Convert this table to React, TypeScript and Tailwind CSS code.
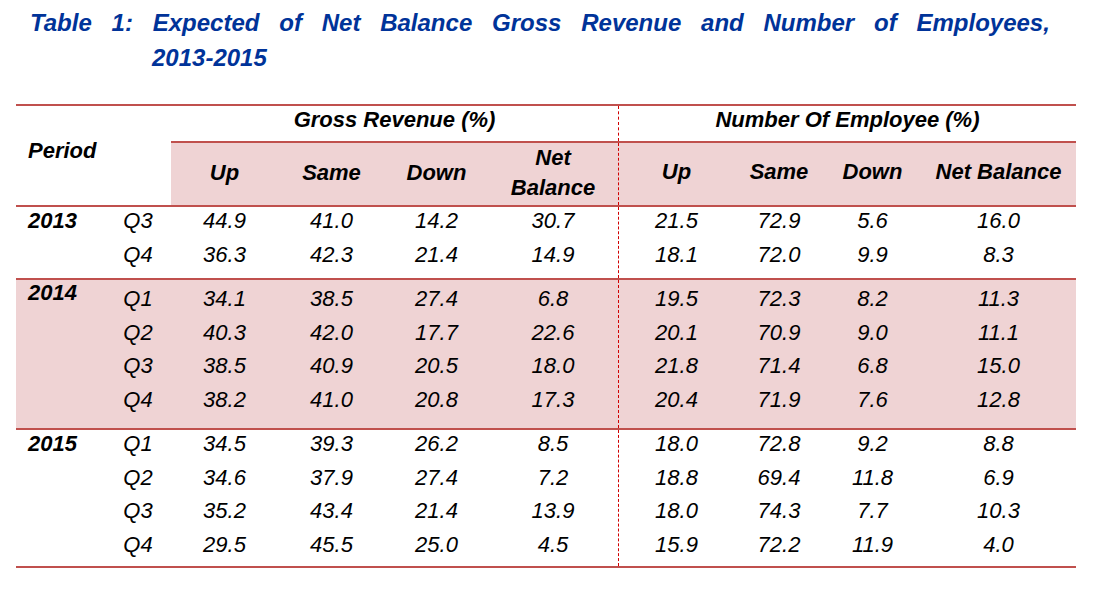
import React from "react";

type Row = { q: string; v: string[] };
type Group = { year: string; rows: Row[]; shaded?: boolean; pad: string; yearClass?: string };

const titleWords = ["Table", "1:", "Expected", "of", "Net", "Balance", "Gross", "Revenue", "and", "Number", "of", "Employees,"];

const groups: Group[] = [
  {
    year: "2013",
    pad: "pt-0 pb-[4px]",
    rows: [
      { q: "Q3", v: ["44.9", "41.0", "14.2", "30.7", "21.5", "72.9", "5.6", "16.0"] },
      { q: "Q4", v: ["36.3", "42.3", "21.4", "14.9", "18.1", "72.0", "9.9", "8.3"] },
    ],
  },
  {
    year: "2014",
    shaded: true,
    pad: "pt-[5px] pb-[9px]",
    yearClass: "-mt-[6px]",
    rows: [
      { q: "Q1", v: ["34.1", "38.5", "27.4", "6.8", "19.5", "72.3", "8.2", "11.3"] },
      { q: "Q2", v: ["40.3", "42.0", "17.7", "22.6", "20.1", "70.9", "9.0", "11.1"] },
      { q: "Q3", v: ["38.5", "40.9", "20.5", "18.0", "21.8", "71.4", "6.8", "15.0"] },
      { q: "Q4", v: ["38.2", "41.0", "20.8", "17.3", "20.4", "71.9", "7.6", "12.8"] },
    ],
  },
  {
    year: "2015",
    pad: "pt-0 pb-[2px]",
    rows: [
      { q: "Q1", v: ["34.5", "39.3", "26.2", "8.5", "18.0", "72.8", "9.2", "8.8"] },
      { q: "Q2", v: ["34.6", "37.9", "27.4", "7.2", "18.8", "69.4", "11.8", "6.9"] },
      { q: "Q3", v: ["35.2", "43.4", "21.4", "13.9", "18.0", "74.3", "7.7", "10.3"] },
      { q: "Q4", v: ["29.5", "45.5", "25.0", "4.5", "15.9", "72.2", "11.9", "4.0"] },
    ],
  },
];

const GroupBlock: React.FC<{ g: Group }> = ({ g }) => (
  <div className={`flex border-t-2 border-[#c0504d] ${g.shaded ? "bg-[#efd3d4]" : ""}`}>
    <div className={`w-[602px] grid grid-cols-[89px_66px_107px_107px_103px_130px] auto-rows-[33.5px] leading-[27px] ${g.pad}`}>
      {g.rows.map((r, i) => (
        <React.Fragment key={r.q}>
          <div className={`pl-3 font-bold ${g.yearClass ?? ""}`}>{i === 0 ? g.year : ""}</div>
          <div className="text-center">{r.q}</div>
          {r.v.slice(0, 4).map((v, j) => (
            <div key={j} className="text-center">{v}</div>
          ))}
        </React.Fragment>
      ))}
    </div>
    <div className={`flex-1 border-l border-dashed border-[#d00000] grid grid-cols-[115px_90px_97px_155px] auto-rows-[33.5px] leading-[27px] ${g.pad}`}>
      {g.rows.map((r) =>
        r.v.slice(4).map((v, j) => (
          <div key={r.q + j} className="text-center">{v}</div>
        ))
      )}
    </div>
  </div>
);

export default function App() {
  return (
    <div className="w-[1096px] h-[589px] bg-white text-black italic font-['Liberation_Sans',Arial,sans-serif] text-[22px]">
      <div className="pt-[5px] font-bold text-[#003399] text-[24px] leading-[35px]">
        <div className="ml-[30px] w-[1020px] flex justify-between">
          {titleWords.map((w, i) => (
            <span key={i}>{w}</span>
          ))}
        </div>
        <div className="pl-[152px]">2013-2015</div>
      </div>

      <div className="mt-[29px] ml-[16px] w-[1060px] border-t-2 border-b-2 border-[#c0504d]">
        <div className="flex">
          <div className="w-[155px] pl-3 pt-[31px] font-bold leading-[27px]">Period</div>
          <div className="flex-1 font-bold">
            <div className="flex h-[37px] border-b-2 border-[#c0504d] leading-[27px]">
              <div className="w-[447px] text-center">Gross Revenue (%)</div>
              <div className="flex-1 border-l border-dashed border-[#d00000] text-center">Number Of Employee (%)</div>
            </div>
            <div className="flex h-[62px] bg-[#efd3d4] leading-[30px]">
              <div className="w-[447px] grid grid-cols-[107px_107px_103px_130px] items-center pb-[4px] text-center">
                <div>Up</div>
                <div>Same</div>
                <div>Down</div>
                <div>
                  Net
                  <br />
                  Balance
                </div>
              </div>
              <div className="flex-1 border-l border-dashed border-[#d00000] grid grid-cols-[115px_90px_97px_155px] items-center pb-[4px] text-center">
                <div>Up</div>
                <div>Same</div>
                <div>Down</div>
                <div>Net Balance</div>
              </div>
            </div>
          </div>
        </div>
        {groups.map((g) => (
          <GroupBlock key={g.year} g={g} />
        ))}
      </div>
    </div>
  );
}
